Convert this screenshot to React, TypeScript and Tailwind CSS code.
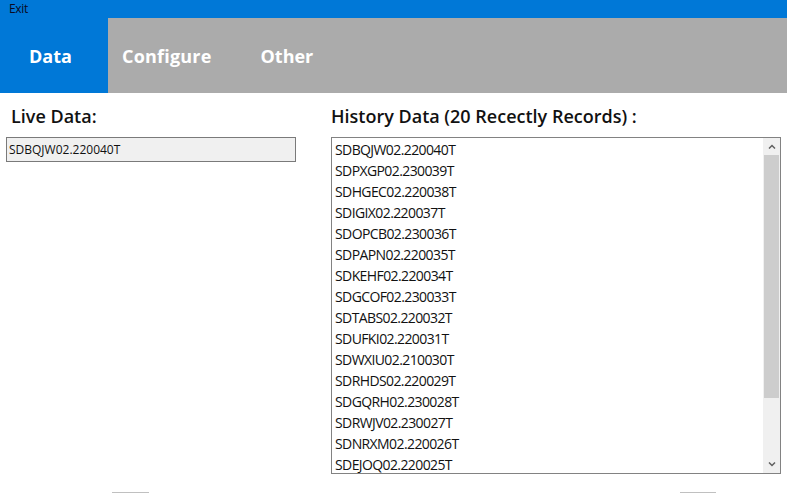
import React from 'react';

const HISTORY = [
  'SDBQJW02.220040T',
  'SDPXGP02.230039T',
  'SDHGEC02.220038T',
  'SDIGIX02.220037T',
  'SDOPCB02.230036T',
  'SDPAPN02.220035T',
  'SDKEHF02.220034T',
  'SDGCOF02.230033T',
  'SDTABS02.220032T',
  'SDUFKI02.220031T',
  'SDWXIU02.210030T',
  'SDRHDS02.220029T',
  'SDGQRH02.230028T',
  'SDRWJV02.230027T',
  'SDNRXM02.220026T',
  'SDEJOQ02.220025T',
];

const font = { fontFamily: '"Open Sans", "Noto Sans", sans-serif' };

export default function App() {
  return (
    <div className="w-[787px] h-[494px] bg-white overflow-hidden flex flex-col" style={font}>
      {/* Menu strip */}
      <div className="h-[18px] bg-[#0078d7] flex items-center px-[9px]">
        <span className="text-[12px] leading-none text-[#0a0a23] tracking-[-0.3px]">Exit</span>
      </div>

      {/* Tabs */}
      <div className="h-[75px] bg-[#ababab] flex pt-[2px]">
        <div className="w-[108px] -mt-[2px] bg-[#0078d7] flex items-center pl-[29px] pt-[2px]">
          <span className="text-[18px] font-bold text-white">Data</span>
        </div>
        <div className="ml-[14px] flex items-center">
          <span className="text-[18px] font-bold text-white tracking-[0.2px]">Configure</span>
        </div>
        <div className="ml-[49px] flex items-center">
          <span className="text-[18px] font-bold text-white">Other</span>
        </div>
      </div>

      {/* Content */}
      <div className="flex-1 flex relative">
        <div className="w-[325px] flex flex-col pl-[6px] pt-[11px]">
          <div className="pl-[5px] h-[24px] flex items-center text-[18px] font-semibold text-[#111]">Live Data:</div>
          <div className="mt-[9px] w-[290px] h-[25px] bg-[#f0f0f0] border border-[#7a7a7a] flex items-center px-[2px] text-[12px] text-[#111]">
            SDBQJW02.220040T
          </div>
        </div>

        <div className="flex-1 flex flex-col pt-[11px] pl-[6px]">
          <div className="h-[24px] flex items-center text-[18px] font-semibold text-[#111]">History Data (20 Recectly Records) :</div>
          <div className="mt-[9px] w-[450px] h-[337px] border border-[#828282] flex overflow-hidden">
            <div className="flex-1 pl-[3px] pt-px overflow-hidden">
              {HISTORY.map((h) => (
                <div key={h} className="h-[21px] leading-[21px] text-[14px] tracking-[-0.6px] text-[#111]">{h}</div>
              ))}
            </div>
            <div className="w-[17px] bg-[#f0f0f0] flex flex-col">
              <div className="h-[17px] flex items-center justify-center">
                <svg width="8" height="5" viewBox="0 0 8 5"><path d="M1 4.5 L4 1.5 L7 4.5" stroke="#606060" strokeWidth="1.5" fill="none" /></svg>
              </div>
              <div className="h-[243px] mx-px bg-[#cdcdcd]" />
              <div className="flex-1" />
              <div className="h-[17px] flex items-center justify-center">
                <svg width="8" height="5" viewBox="0 0 8 5"><path d="M1 0.5 L4 3.5 L7 0.5" stroke="#606060" strokeWidth="1.5" fill="none" /></svg>
              </div>
            </div>
          </div>
        </div>

        {/* cut-off buttons peeking at the bottom edge */}
        <div className="absolute left-[112px] top-[399px] w-[37px] h-px bg-[#c0c0c0]" />
        <div className="absolute left-[680px] top-[399px] w-[36px] h-px bg-[#c0c0c0]" />
      </div>
    </div>
  );
}
